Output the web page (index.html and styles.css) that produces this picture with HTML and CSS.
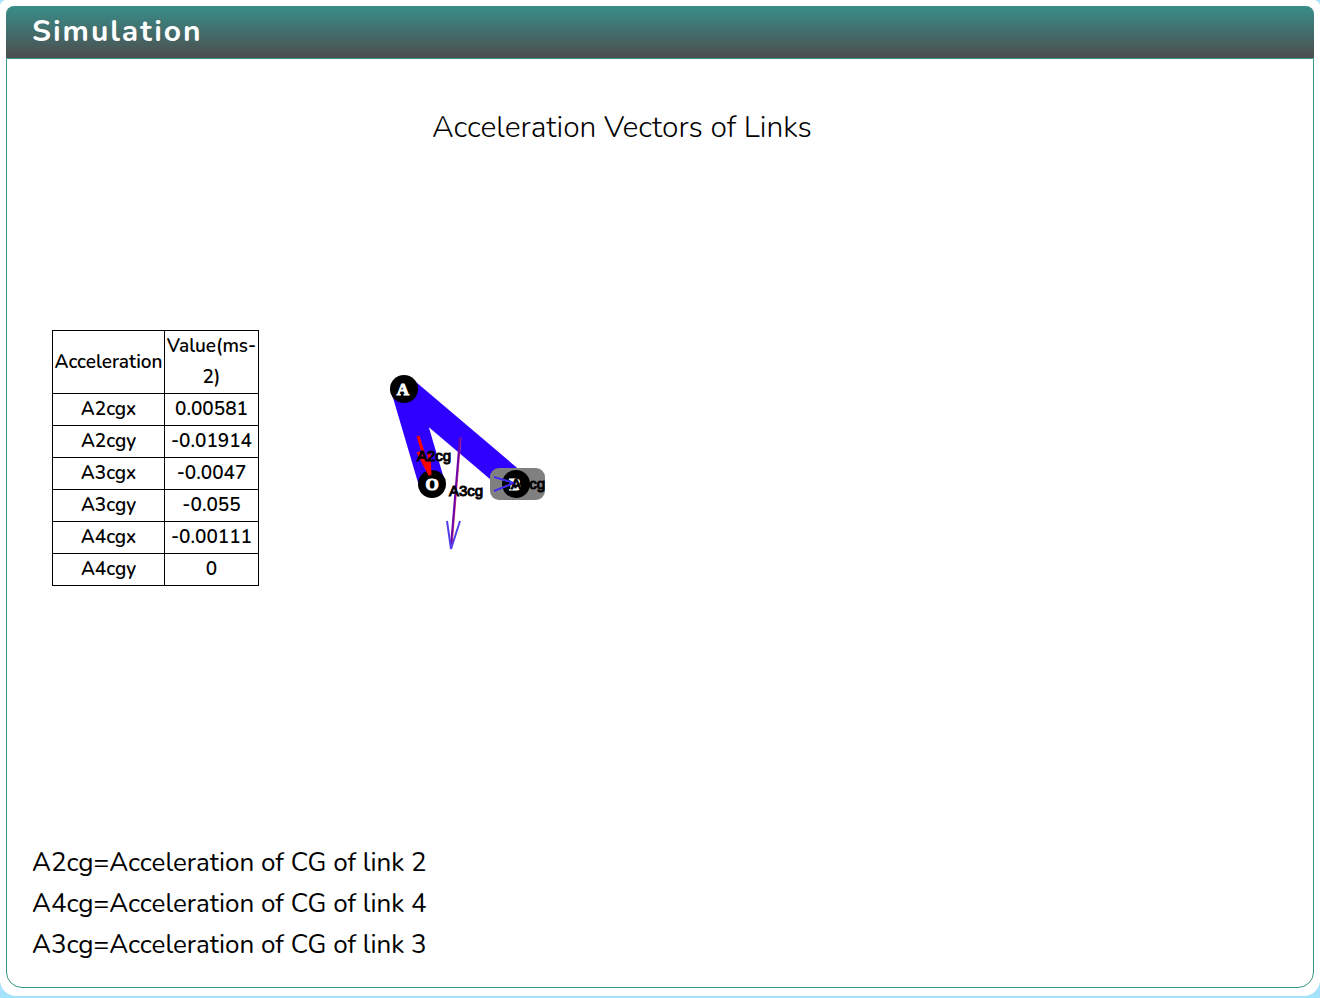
FILE: index.html
```html
<!DOCTYPE html>
<html lang="en">
<head>
<meta charset="utf-8">
<title>Simulation</title>
<link rel="stylesheet" href="styles.css">
</head>
<body>
<main class="card">
  <section class="panel">
    <h1 class="panel-title">Simulation</h1>
    <div class="panel-body">
      <div class="workspace">
        <table class="results">
          <thead>
            <tr><th scope="col">Acceleration</th><th scope="col">Value(ms-<br>2)</th></tr>
          </thead>
          <tbody>
            <tr><td>A2cgx</td><td>0.00581</td></tr>
            <tr><td>A2cgy</td><td>-0.01914</td></tr>
            <tr><td>A3cgx</td><td>-0.0047</td></tr>
            <tr><td>A3cgy</td><td>-0.055</td></tr>
            <tr><td>A4cgx</td><td>-0.00111</td></tr>
            <tr><td>A4cgy</td><td>0</td></tr>
          </tbody>
        </table>
        <figure class="figure">
          <figcaption class="figure-title">Acceleration Vectors of Links</figcaption>
          <svg class="mechanism" viewBox="382 148 480 660" role="img" aria-label="Slider-crank mechanism with acceleration vectors">
            <g class="links">
              <path d="M404 389L432 484M404 389L516 484"/>
            </g>
            <rect class="slider" x="490" y="468" width="55" height="32" rx="9"/>
            <g class="joints">
              <circle cx="404" cy="389" r="14"/>
              <circle cx="432" cy="484" r="14"/>
              <circle cx="516" cy="484" r="14"/>
            </g>
            <g class="joint-names">
              <text x="403" y="395">A</text>
              <text x="432" y="490">O</text>
              <text x="515" y="490">B</text>
            </g>
            <path class="vector-red" d="M418 436L430 475M418 452L430 475L429 453"/>
            <path class="vector-halo" d="M461 437L452 546"/>
            <path class="vector-purple" d="M460 437L451 546"/>
            <path class="vector-blue" d="M447 521L451 549L460 521M494 477L514 483L494 491"/>
            <g class="vector-names">
              <text x="417" y="461">A2cg</text>
              <text x="449" y="496">A3cg</text>
              <text x="511" y="489">A4cg</text>
            </g>
            <path class="vector-tip" d="M494 477L514 483L494 491"/>
          </svg>
        </figure>
      </div>
      <div class="notes">
        <p>A2cg=Acceleration of CG of link 2</p>
        <p>A4cg=Acceleration of CG of link 4</p>
        <p>A3cg=Acceleration of CG of link 3</p>
      </div>
    </div>
  </section>
</main>
</body>
</html>
```
FILE: styles.css
```css
* { box-sizing: border-box; }
body {
  margin: 0;
  min-height: 100vh;
  padding-bottom: 2px;
  display: flex;
  background: #a6e1fd;
  color: #000;
  font-family: Nunito, "Open Sans", "Noto Sans", sans-serif;
}
.card {
  flex: 1;
  display: flex;
  padding: 6px 6px 8px;
  background: #fff;
  border-radius: 6px 6px 16px 16px;
}
.panel {
  flex: 1;
  display: flex;
  flex-direction: column;
  border-radius: 8px 8px 16px 16px;
}
.panel-title {
  margin: 0;
  padding: 0 26px;
  height: 52px;
  line-height: 51px;
  font-size: 30px;
  font-weight: 700;
  letter-spacing: 2px;
  color: #fff;
  background: linear-gradient(#388e8a, #4d4d4d);
  border-radius: 8px 8px 0 0;
}
.panel-body {
  flex: 1;
  padding: 49px 25px 20px;
  border: 1px solid #379683;
  border-radius: 0 0 16px 16px;
}
.workspace {
  display: grid;
  grid-template-columns: 207px 1fr;
  column-gap: 123px;
  align-items: center;
  padding-left: 20px;
}
.results {
  width: 100%;
  table-layout: fixed;
  border-collapse: collapse;
  font-size: 19px;
  line-height: 31px;
  font-weight: 600;
  text-align: center;
}
.results th, .results td {
  padding: 0;
  border: 1px solid #000;
  font-weight: 600;
}
.results th:first-child { width: 112px; }
.figure { margin: 0; max-width: 480px; }
.figure-title {
  line-height: 40px;
  font-size: 30px;
  font-weight: 300;
  text-align: center;
  color: #000;
}
.mechanism { display: block; width: 100%; }
.links { stroke: #2f00ff; stroke-width: 26px; fill: none; }
.slider { fill: #808080; }
.joint-names text {
  fill: #fff;
  stroke: #fff;
  stroke-width: 1px;
  font: bold 17px "Liberation Serif", serif;
  text-anchor: middle;
}
.vector-names text {
  stroke: #000;
  stroke-width: 1px;
  font: 15px "Liberation Sans", sans-serif;
}
.vector-red { stroke: #f00; stroke-width: 3px; fill: none; }
.vector-halo { stroke: #e04070; stroke-width: 1px; }
.vector-purple { stroke: #6a00a8; stroke-width: 2px; }
.vector-blue { stroke: #5340e8; stroke-width: 2px; fill: none; }
.vector-tip { stroke: #2f20ff; stroke-width: 1px; fill: none; }
.notes { margin-top: 34px; font-size: 26px; line-height: 41px; }
.notes p { margin: 0; }
```
